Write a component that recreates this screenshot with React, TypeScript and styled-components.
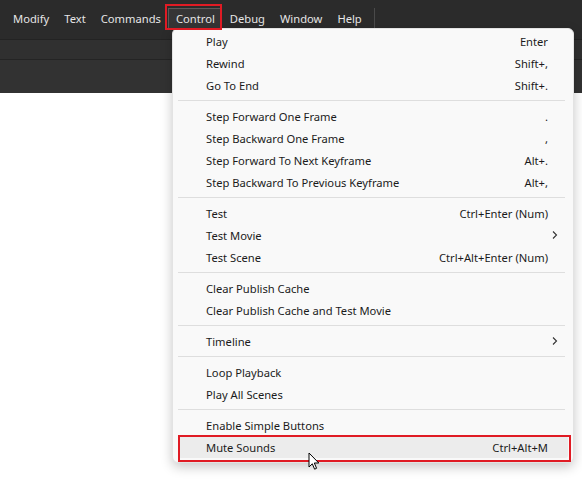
import styled, { createGlobalStyle } from "styled-components";

const GlobalStyle = createGlobalStyle`
    html, body {
        margin: 0;
        padding: 0;
        background: #ffffff;
    }
    body {
        font-family: "Noto Sans", "Open Sans", sans-serif;
        width: 582px;
        height: 483px;
        overflow: hidden;
    }
`

const StyledPage = styled.div`
    position: relative;
    width: 582px;
    height: 483px;
    background: #ffffff;
`

const StyledMenuBar = styled.div`
    align-items: flex-start;
    background: #2b2b2b;
    box-sizing: border-box;
    display: flex;
    height: 39px;
    padding: 8px 0 0 5.5px;
`

const StyledBarItem = styled.div<{ $active?: boolean }>`
    border: 1px solid ${p => p.$active ? "#5a5a5a" : "transparent"};
    background: ${p => p.$active ? "#353535" : "transparent"};
    box-sizing: border-box;
    color: #e6e6e6;
    font-size: 11.2px;
    height: 21px;
    line-height: 19px;
    padding: 0 6.5px;
`

const StyledBarDivider = styled.div`
    background: #4a4a4a;
    height: 21px;
    margin-left: 5px;
    width: 1px;
`

const StyledToolStrip = styled.div`
    background: #303030;
    border-top: 1px solid #232323;
    border-bottom: 1px solid #242424;
    height: 19px;
`

const StyledPanel = styled.div`
    background: #323232;
    height: 33px;
`

const StyledMenu = styled.div`
    background: #f9f9f9;
    border: 1px solid #e3e3e3;
    border-radius: 6px;
    box-shadow: 0 4px 12px rgba(0, 0, 0, 0.22);
    box-sizing: border-box;
    color: #1b1b1b;
    left: 172px;
    padding: 1px 0 4px;
    position: absolute;
    top: 28px;
    width: 402px;
`

const StyledRow = styled.div<{ $hover?: boolean }>`
    align-items: center;
    background: ${p => p.$hover ? "#ececec" : "transparent"};
    border-radius: 3px;
    display: flex;
    font-size: 11.2px;
    height: 22px;
    justify-content: space-between;
    margin: 0 5px;
    padding: 0 20px 0 28px;
`

const StyledShortcut = styled.span`
    font-size: 11.2px;
`

const StyledChevron = styled.svg`
    margin-right: -11px;
`

const StyledSeparator = styled.div`
    background: #dedede;
    height: 1px;
    margin: 4px 8px 4px 5px;
`

const StyledAnnotation = styled.div<{ $x: number; $y: number; $w: number; $h: number }>`
    border: 2px solid #e01b24;
    box-sizing: border-box;
    height: ${p => p.$h}px;
    left: ${p => p.$x}px;
    pointer-events: none;
    position: absolute;
    top: ${p => p.$y}px;
    width: ${p => p.$w}px;
`

const StyledCursor = styled.svg`
    left: 308px;
    position: absolute;
    top: 452px;
`

type Item =
    | { kind: "row"; label: string; shortcut?: string; sub?: boolean; hover?: boolean }
    | { kind: "sep" }

const items: Item[] = [
    { kind: "row", label: "Play", shortcut: "Enter" },
    { kind: "row", label: "Rewind", shortcut: "Shift+," },
    { kind: "row", label: "Go To End", shortcut: "Shift+." },
    { kind: "sep" },
    { kind: "row", label: "Step Forward One Frame", shortcut: "." },
    { kind: "row", label: "Step Backward One Frame", shortcut: "," },
    { kind: "row", label: "Step Forward To Next Keyframe", shortcut: "Alt+." },
    { kind: "row", label: "Step Backward To Previous Keyframe", shortcut: "Alt+," },
    { kind: "sep" },
    { kind: "row", label: "Test", shortcut: "Ctrl+Enter (Num)" },
    { kind: "row", label: "Test Movie", sub: true },
    { kind: "row", label: "Test Scene", shortcut: "Ctrl+Alt+Enter (Num)" },
    { kind: "sep" },
    { kind: "row", label: "Clear Publish Cache" },
    { kind: "row", label: "Clear Publish Cache and Test Movie" },
    { kind: "sep" },
    { kind: "row", label: "Timeline", sub: true },
    { kind: "sep" },
    { kind: "row", label: "Loop Playback" },
    { kind: "row", label: "Play All Scenes" },
    { kind: "sep" },
    { kind: "row", label: "Enable Simple Buttons" },
    { kind: "row", label: "Mute Sounds", shortcut: "Ctrl+Alt+M", hover: true },
]

const barItems = ["Modify", "Text", "Commands", "Control", "Debug", "Window", "Help"]

const App = () => {
    return (
        <StyledPage>
            <GlobalStyle />
            <StyledMenuBar>
                {barItems.map(name => (
                    <StyledBarItem key={name} $active={name === "Control"}>{name}</StyledBarItem>
                ))}
                <StyledBarDivider />
            </StyledMenuBar>
            <StyledToolStrip />
            <StyledPanel />

            <StyledMenu>
                {items.map((item, i) =>
                    item.kind === "sep" ? (
                        <StyledSeparator key={i} />
                    ) : (
                        <StyledRow key={i} $hover={item.hover}>
                            <span>{item.label}</span>
                            {item.sub ? (
                                <StyledChevron width="8" height="10" viewBox="0 0 8 10">
                                    <path d="M2 1.5 L5.5 5 L2 8.5" fill="none" stroke="#333" strokeWidth="1.1" />
                                </StyledChevron>
                            ) : (
                                <StyledShortcut>{item.shortcut}</StyledShortcut>
                            )}
                        </StyledRow>
                    )
                )}
            </StyledMenu>

            <StyledAnnotation $x={165} $y={4} $w={57} $h={26} />
            <StyledAnnotation $x={178} $y={435} $w={393} $h={27} />

            <StyledCursor width="12" height="19" viewBox="0 0 12 19">
                <path d="M1 1 L1 15 L4.3 11.8 L6.6 17.2 L8.6 16.3 L6.3 11 L10.8 11 Z" fill="#ffffff" stroke="#000000" strokeWidth="1" strokeLinejoin="round" />
            </StyledCursor>
        </StyledPage>
    )
}

export default App;
